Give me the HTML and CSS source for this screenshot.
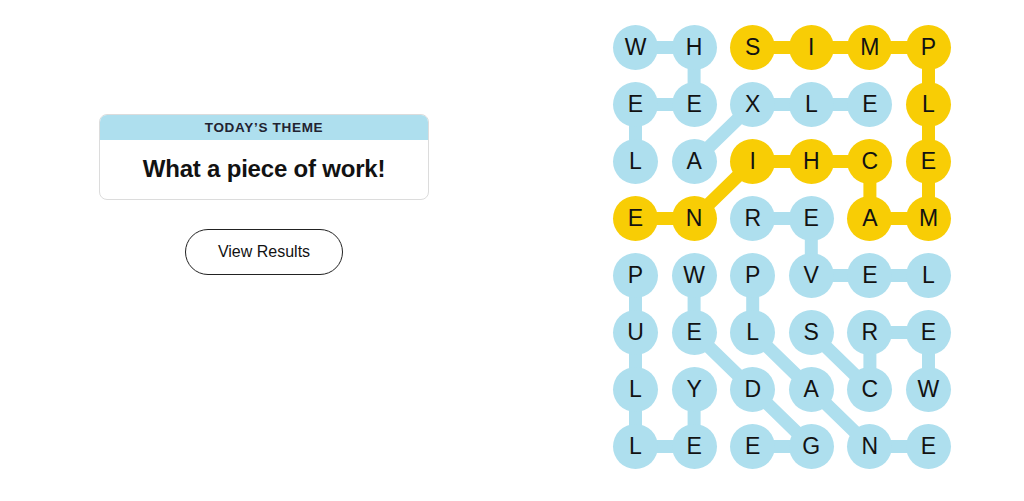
FILE: index.html
```html
<!DOCTYPE html>
<html lang="en">
<head>
<meta charset="utf-8">
<title>Strands</title>
<link rel="stylesheet" href="styles.css">
</head>
<body>
<main class="page">
  <section class="left">
    <div class="theme-card">
      <div class="theme-head">TODAY’S THEME</div>
      <div class="theme-body">What a piece of work!</div>
    </div>
    <button class="results-btn" type="button">View Results</button>
  </section>
  <section class="board">
    <svg class="links" width="338" height="444" viewBox="0 0 338 444" aria-hidden="true">
      <g fill="none" stroke="#aedfee" stroke-width="13" stroke-linejoin="round">
        <polyline points="22.5,22.5 81.1,22.5 81.1,79.5 22.5,79.5 22.5,136.5"/>
        <polyline points="81.1,136.5 139.7,79.5 198.3,79.5 256.9,79.5"/>
        <polyline points="139.7,193.5 198.3,193.5 198.3,250.5 256.9,250.5 315.5,250.5"/>
        <polyline points="22.5,250.5 22.5,307.5 22.5,364.5 22.5,421.5 81.1,421.5 81.1,364.5"/>
        <polyline points="81.1,250.5 81.1,307.5 139.7,364.5 198.3,421.5 139.7,421.5"/>
        <polyline points="198.3,307.5 256.9,364.5 256.9,307.5 315.5,307.5 315.5,364.5"/>
        <polyline points="139.7,250.5 139.7,307.5 198.3,364.5 256.9,421.5 315.5,421.5"/>
      </g>
      <g fill="none" stroke="#f8cd05" stroke-width="13" stroke-linejoin="round">
        <polyline points="139.7,22.5 198.3,22.5 256.9,22.5 315.5,22.5 315.5,79.5 315.5,136.5 315.5,193.5 256.9,193.5 256.9,136.5 198.3,136.5 139.7,136.5 81.1,193.5 22.5,193.5"/>
      </g>
    </svg>
    <div class="grid">
      <span class="cell">W</span><span class="cell">H</span><span class="cell y">S</span><span class="cell y">I</span><span class="cell y">M</span><span class="cell y">P</span>
      <span class="cell">E</span><span class="cell">E</span><span class="cell">X</span><span class="cell">L</span><span class="cell">E</span><span class="cell y">L</span>
      <span class="cell">L</span><span class="cell">A</span><span class="cell y">I</span><span class="cell y">H</span><span class="cell y">C</span><span class="cell y">E</span>
      <span class="cell y">E</span><span class="cell y">N</span><span class="cell">R</span><span class="cell">E</span><span class="cell y">A</span><span class="cell y">M</span>
      <span class="cell">P</span><span class="cell">W</span><span class="cell">P</span><span class="cell">V</span><span class="cell">E</span><span class="cell">L</span>
      <span class="cell">U</span><span class="cell">E</span><span class="cell">L</span><span class="cell">S</span><span class="cell">R</span><span class="cell">E</span>
      <span class="cell">L</span><span class="cell">Y</span><span class="cell">D</span><span class="cell">A</span><span class="cell">C</span><span class="cell">W</span>
      <span class="cell">L</span><span class="cell">E</span><span class="cell">E</span><span class="cell">G</span><span class="cell">N</span><span class="cell">E</span>
    </div>
  </section>
</main>
</body>
</html>
```

FILE: styles.css
```css
html, body {
  margin: 0;
  padding: 0;
  background: #ffffff;
}

body {
  width: 1024px;
  height: 501px;
  overflow: hidden;
  font-family: "Liberation Sans", Arial, sans-serif;
  color: #121212;
}

.page {
  display: flex;
  align-items: flex-start;
}

.left {
  width: 330px;
  margin-left: 99px;
  margin-top: 114px;
  display: flex;
  flex-direction: column;
  align-items: center;
  gap: 29px;
}

.theme-card {
  width: 100%;
  box-sizing: border-box;
  border: 1px solid #dcdcdc;
  border-radius: 8px;
  overflow: hidden;
  background: #fff;
}

.theme-head {
  background: #aedfee;
  height: 25px;
  line-height: 26px;
  text-align: center;
  font-size: 13.5px;
  font-weight: 700;
  letter-spacing: 0.7px;
  color: #222230;
}

.theme-body {
  height: 59px;
  line-height: 58px;
  text-align: center;
  font-size: 24px;
  font-weight: 700;
  letter-spacing: -0.2px;
  color: #121212;
}

.results-btn {
  width: 158px;
  height: 46px;
  border: 1.5px solid #222;
  border-radius: 23px;
  background: #fff;
  font-family: "Liberation Sans", Arial, sans-serif;
  font-size: 16px;
  color: #121212;
  padding: 0;
}

.board {
  position: relative;
  margin-left: 184px;
  margin-top: 25px;
  width: 338px;
  height: 444px;
}

.links {
  position: absolute;
  left: 0;
  top: 0;
}

.grid {
  position: relative;
  display: grid;
  grid-template-columns: repeat(6, 45px);
  grid-auto-rows: 45px;
  column-gap: 13.6px;
  row-gap: 12px;
}

.cell {
  width: 45px;
  height: 45px;
  border-radius: 50%;
  background: #aedfee;
  display: flex;
  align-items: center;
  justify-content: center;
  font-family: "Liberation Sans", Arial, sans-serif;
  font-size: 23px;
  color: #121212;
}

.cell.y {
  background: #f8cd05;
}
```
